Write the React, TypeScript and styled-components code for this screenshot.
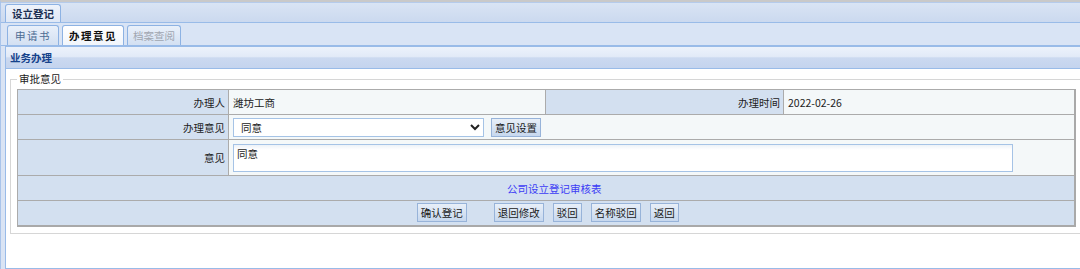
import React from "react";
import styled, { createGlobalStyle } from "styled-components";

const GlobalStyle = createGlobalStyle`
  html, body {
    margin: 0;
    padding: 0;
    overflow: hidden;
    background: #fff;
  }
  body {
    font-family: "Noto Sans CJK SC", "Liberation Sans", sans-serif;
    font-size: 10.5px;
    color: #222;
  }
`;

const Frame = styled.div`
  width: 1110px;
  height: 269px;
  box-sizing: border-box;
  border-top: 2px solid #c9c9c9;
  border-left: 1px solid #a9c4ea;
  background: #dae4f4;
  overflow: hidden;
`;

const TopStrip = styled.div`
  display: flex;
  align-items: flex-end;
  height: 19px;
  padding-left: 4px;
  border-top: 1px solid #b5cbeb;
  border-bottom: 1px solid #99bbe8;
  background: linear-gradient(#d9e4f4, #cbd9ef);
`;

const TopTab = styled.div`
  height: 17px;
  line-height: 17px;
  padding: 0 6px;
  border: 1px solid #8db2e3;
  border-bottom: none;
  border-radius: 3px 3px 0 0;
  background: linear-gradient(#eef3fb, #dfe8f6);
  font-weight: bold;
  color: #1b2f52;
`;

const SubStrip = styled.div`
  display: flex;
  align-items: flex-end;
  gap: 3px;
  height: 22px;
  padding-left: 6px;
  border-bottom: 1px solid #99bbe8;
  background: #d9e4f5;
`;

const SubTab = styled.div<{ $active?: boolean; $off?: boolean }>`
  height: 19px;
  line-height: 19px;
  padding: 0 ${(p) => (p.$off ? "5px" : p.$active ? "6px" : "7px")};
  border: 1px solid #8db2e3;
  border-bottom: none;
  border-radius: 3px 3px 0 0;
  letter-spacing: ${(p) => (p.$off ? "0" : "1.5px")};
  font-weight: ${(p) => (p.$active ? "bold" : "normal")};
  color: ${(p) => (p.$active ? "#111" : p.$off ? "#a0a6b0" : "#4d6c93")};
  background: ${(p) =>
    p.$active
      ? "linear-gradient(#ffffff, #f1f5fb)"
      : "linear-gradient(#e9f0fa, #d3e0f2)"};
`;

const Panel = styled.div`
  margin-left: 4px;
  border: 1px solid #99bbe8;
  border-right: none;
`;

const PanelHeader = styled.div`
  height: 21px;
  line-height: 21px;
  padding-left: 4px;
  border-bottom: 1px solid #99bbe8;
  background: linear-gradient(#ecf2fb 0%, #e2eaf8 45%, #cbd9f0 52%, #c4d4ee 100%);
  font-weight: bold;
  color: #15428b;
`;

const PanelBody = styled.div`
  height: 199px;
  box-sizing: border-box;
  padding: 3px 0 0 4px;
  background: #fff;
`;

const Fieldset = styled.fieldset`
  margin: 0;
  padding: 3px 6px 6px 6px;
  border: 1px solid #d6d6d6;
`;

const Legend = styled.legend`
  padding: 0 2px;
  line-height: 14px;
  color: #222;
`;

const Grid = styled.table`
  width: 1057px;
  table-layout: fixed;
  border-collapse: collapse;
  border-right: 2px solid #a9a9a9;
  border-bottom: 2px solid #a9a9a9;
`;

const Row = styled.tr<{ $h: number }>`
  height: ${(p) => p.$h}px;
`;

const Label = styled.td`
  padding: 0 3px 0 0;
  text-align: right;
  background: #d3e0f0;
  border: 1px solid #ababab;
  white-space: nowrap;
`;

const Value = styled.td`
  padding: 0 0 0 4px;
  background: #f4f8f9;
  border: 1px solid #ababab;
  white-space: nowrap;
`;

const Bar = styled.td`
  background: #d3e0f0;
  border: 1px solid #ababab;
  text-align: center;
`;

const Inline = styled.div`
  display: flex;
  align-items: center;
  gap: 7px;
`;

const Select = styled.select`
  width: 251px;
  height: 19px;
  padding: 0 0 0 3px;
  border: 1px solid #a5c3e6;
  background: #fff;
  font: inherit;
  color: #222;
`;

const Button = styled.button<{ $wide?: boolean }>`
  height: 19px;
  padding: 0 3px;
  margin-right: ${(p) => (p.$wide ? "18px" : "0")};
  border: 1px solid #97b3d9;
  background: linear-gradient(#e8eff8, #c7d8ee);
  font: inherit;
  color: #1a1a1a;
  line-height: 17px;
`;

const Note = styled.textarea`
  display: block;
  width: 780px;
  height: 28px;
  box-sizing: border-box;
  padding: 1px 3px;
  border: 1px solid #a5c3e6;
  background: linear-gradient(#edf2f8 0, #ffffff 5px);
  font: inherit;
  color: #222;
  resize: none;
`;

const Link = styled.a`
  color: #3c3cf5;
  text-decoration: none;
  padding-left: 17px;
`;

const Actions = styled.div`
  display: flex;
  justify-content: center;
  gap: 9px;
  padding-left: 4px;
`;

export default function App() {
  return (
    <>
      <GlobalStyle />
      <Frame>
        <TopStrip>
          <TopTab>设立登记</TopTab>
        </TopStrip>
        <SubStrip>
          <SubTab>申请书</SubTab>
          <SubTab $active>办理意见</SubTab>
          <SubTab $off>档案查阅</SubTab>
        </SubStrip>
        <Panel>
          <PanelHeader>业务办理</PanelHeader>
          <PanelBody>
            <Fieldset>
              <Legend>审批意见</Legend>
              <Grid>
                <colgroup>
                  <col style={{ width: 211 }} />
                  <col style={{ width: 317 }} />
                  <col style={{ width: 238 }} />
                  <col style={{ width: 291 }} />
                </colgroup>
                <tbody>
                  <Row $h={25}>
                    <Label>办理人</Label>
                    <Value>潍坊工商</Value>
                    <Label>办理时间</Label>
                    <Value>2022-02-26</Value>
                  </Row>
                  <Row $h={25}>
                    <Label>办理意见</Label>
                    <Value colSpan={3}>
                      <Inline>
                        <Select defaultValue="同意">
                          <option>同意</option>
                          <option>不同意</option>
                        </Select>
                        <Button>意见设置</Button>
                      </Inline>
                    </Value>
                  </Row>
                  <Row $h={36}>
                    <Label>意见</Label>
                    <Value colSpan={3}>
                      <Note defaultValue="同意" />
                    </Value>
                  </Row>
                  <Row $h={25}>
                    <Bar colSpan={4}>
                      <Link href="#">公司设立登记审核表</Link>
                    </Bar>
                  </Row>
                  <Row $h={25}>
                    <Bar colSpan={4}>
                      <Actions>
                        <Button $wide>确认登记</Button>
                        <Button>退回修改</Button>
                        <Button>驳回</Button>
                        <Button>名称驳回</Button>
                        <Button>返回</Button>
                      </Actions>
                    </Bar>
                  </Row>
                </tbody>
              </Grid>
            </Fieldset>
          </PanelBody>
        </Panel>
      </Frame>
    </>
  );
}
